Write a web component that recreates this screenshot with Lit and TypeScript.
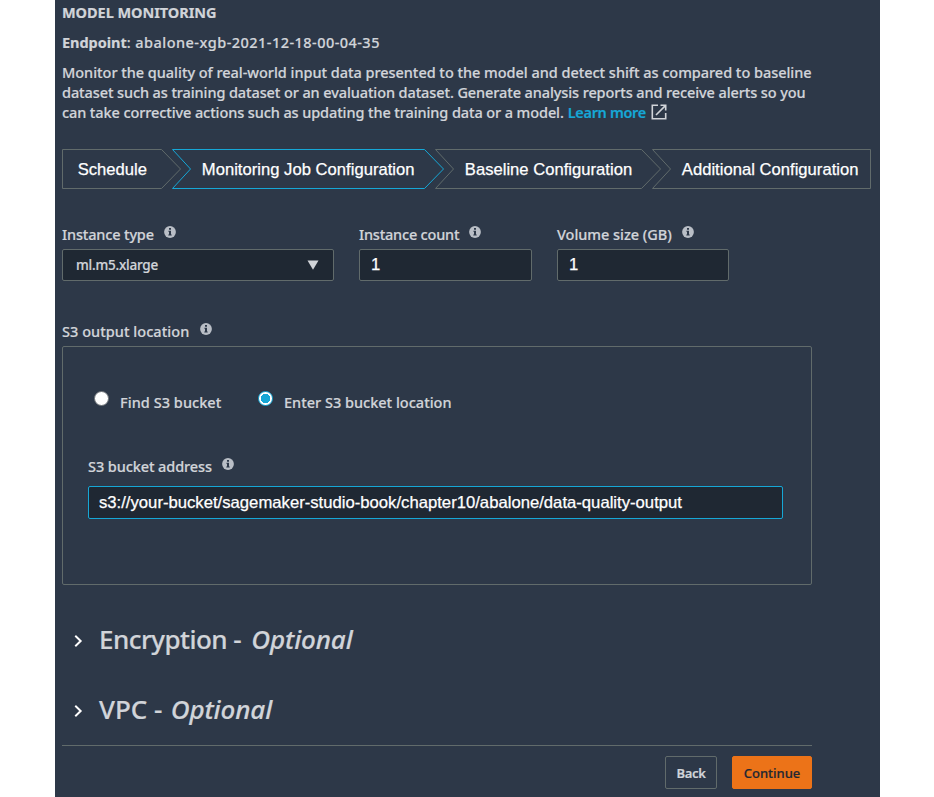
import { LitElement, html, svg, css } from "lit";
import { customElement } from "lit/decorators.js";

interface Step {
  label: string;
  width: number;
  cls: string;
}

const STEPS: Step[] = [
  { label: "Schedule", width: 119, cls: "first" },
  { label: "Monitoring Job Configuration", width: 272, cls: "active" },
  { label: "Baseline Configuration", width: 226, cls: "" },
  { label: "Additional Configuration", width: 219, cls: "last" },
];

const infoIcon = html`<svg class="info" width="12" height="12" viewBox="0 0 12 12">
  <circle cx="6" cy="6" r="5.9" fill="#b9bec6" />
  <path d="M5 2h2v1.7H5zM4.4 4.8H7v3.7h.7v1H4.3v-1H5V5.8h-.6z" fill="#2d3848" />
</svg>`;

const chevron = html`<svg class="chevron" width="10" height="14" viewBox="0 0 10 14">
  <path d="M1.4 1.2 L7.4 7 L1.4 12.8" fill="none" stroke="#fff" stroke-width="2.2" />
</svg>`;

@customElement("app-root")
export class AppRoot extends LitElement {
  static styles = css`
    :host {
      display: block;
      height: 797px;
      overflow: hidden;
      background: #fff;
      font: 500 14.5px/20px "Noto Sans", sans-serif;
      color: #d1d4d9;
      -webkit-text-stroke: 0.2px;
    }
    * { box-sizing: border-box; }
    .panel {
      width: 825px;
      height: 797px;
      margin-left: 55px;
      padding: 2px 9px 0 7px;
      background: #2d3848;
      white-space: nowrap;
    }
    h1 { margin: 0; font-size: 14.5px; line-height: 20px; font-weight: 700; letter-spacing: -0.05px; }
    .endpoint { margin-top: 10px; letter-spacing: 0.46px; }
    .endpoint b { letter-spacing: -0.04px; }
    .intro { margin-top: 10px; }
    .intro div { display: flex; height: 20px; align-items: center; }
    .l1 { letter-spacing: -0.033px; }
    .l2 { letter-spacing: -0.103px; }
    .l3 { letter-spacing: -0.1px; }
    .more { color: #16a7d6; font-weight: 600; margin-left: 4px; letter-spacing: -0.34px; }
    .external { margin-left: 5px; }

    .steps { display: flex; margin-top: 27px; height: 40px; }
    .step {
      display: grid;
      height: 40px;
      margin-left: -9px;
      font: 16.6px/40px "Liberation Sans", Arial, sans-serif;
      color: #fff;
      -webkit-text-stroke: 0.25px #fff;
    }
    .step > * { grid-area: 1 / 1; }
    .step.first { margin-left: 0; }
    .step span { padding: 1px 0 0 29.8px; height: 40px; letter-spacing: 0.02px; }
    .step.first span { padding-left: 15.7px; }
    .step path { fill: none; stroke: #616b6b; }
    .step.active path { stroke: #16a7d6; }

    .fields { display: flex; margin-top: 35px; gap: 25px; }
    .label { display: flex; height: 20px; }
    .info { margin: 2px 0 0 10px; flex: none; }
    .type { width: 272px; }
    .count { width: 173px; }
    .volume { width: 172px; }
    .type .label { letter-spacing: -0.16px; }
    .count .label { letter-spacing: -0.2px; }
    .volume .label { letter-spacing: -0.04px; }
    .box {
      display: flex;
      align-items: center;
      height: 32px;
      margin-top: 5px;
      padding: 0 11px 1px;
      border: 1px solid #616b6b;
      border-radius: 2px;
      background: #1f2833;
      font: 16.68px/30px "Liberation Sans", Arial, sans-serif;
      color: #fff;
      -webkit-text-stroke: 0.25px #fff;
    }
    .select {
      justify-content: space-between;
      padding-right: 14px;
      padding-left: 13px;
      font: 500 13.5px/30px "Noto Sans", sans-serif;
      letter-spacing: -0.22px;
      color: #d1d4d9;
      -webkit-text-stroke: 0.2px #d1d4d9;
    }

    .output { margin-top: 40px; letter-spacing: 0.04px; }
    .output .info { margin-left: 11px; }
    .group {
      width: 750px;
      height: 239px;
      margin-top: 5px;
      padding: 45px 25px 0;
      border: 1px solid #616b6b;
      border-radius: 2px;
    }
    .radios { display: flex; height: 20px; padding-left: 6px; }
    .radio {
      width: 15px;
      height: 15px;
      margin: -1px 11px 0 0;
      border-radius: 50%;
      background: #fff;
      border: 1px solid #6b7075;
    }
    .radio.on { border: 1.5px solid #16a7d6; background: radial-gradient(circle, #16a7d6 4.5px, #fff 5px); }
    .choice { display: flex; }
    .choice.find { width: 164px; letter-spacing: 0.05px; }
    .address { margin-top: 44px; letter-spacing: -0.09px; }
    .group .box { width: 695px; height: 33px; margin-top: 10px; padding: 0 10px; border-color: #16a7d6; }

    .section { display: flex; height: 40px; align-items: center; padding-left: 11px; font-size: 26px; }
    .section.enc { margin-top: 34px; letter-spacing: -0.55px; }
    .section.vpc { margin-top: 30px; letter-spacing: 0; }
    .section em { letter-spacing: -0.12px; margin-left: 1.5px; }
    .section.enc em { margin-left: 4px; }
    .section span { white-space: pre; }
    .chevron { margin: 3px 16px 0 1px; flex: none; width: 9px; }
    .footer {
      display: flex;
      justify-content: flex-end;
      gap: 15px;
      width: 750px;
      margin-top: 16px;
      padding-top: 10px;
      border-top: 1px solid #616b6b;
    }
    .btn {
      height: 33px;
      width: 52px;
      border: 1px solid #616b6b;
      border-radius: 2px;
      text-align: center;
      font-size: 13px;
      line-height: 32px;
      font-weight: 600;
      letter-spacing: -0.3px;
    }
    .btn.primary { width: 80px; background: #ec7318; border-color: #ec7318; color: #1f2833; font-weight: 500; letter-spacing: 0; }
  `;

  private outline(s: Step) {
    const w = s.width;
    const right = s.cls === "last" ? `H${w - 0.5}V39.5` : `H${w - 19.5}L${w - 0.5} 20L${w - 19.5} 39.5`;
    const left = s.cls === "first" ? "H.5Z" : "H.5L18.5 20Z";
    return html`<svg width=${w} height="40">${svg`<path d="M.5 .5${right}${left}" />`}</svg>`;
  }

  render() {
    return html`
      <main class="panel">
        <h1>MODEL MONITORING</h1>
        <div class="endpoint"><b>Endpoint</b>: abalone-xgb-2021-12-18-00-04-35</div>
        <div class="intro">
          <div class="l1">Monitor the quality of real-world input data presented to the model and detect shift as compared to baseline</div>
          <div class="l2">dataset such as training dataset or an evaluation dataset. Generate analysis reports and receive alerts so you</div>
          <div class="l3">
            <span>can take corrective actions such as updating the training data or a model.</span>
            <span class="more">Learn more</span>
            <svg class="external" width="16" height="16" viewBox="0 0 16 16" fill="none" stroke="#d1d4d9" stroke-width="1.6">
              <path d="M7 1.3H1.3V14.7H14.7V9M9.5 1.3H14.7V6.5M14.4 1.6L5 11" />
            </svg>
          </div>
        </div>
        <nav class="steps">
          ${STEPS.map((s) => html`<div class="step ${s.cls}">${this.outline(s)}<span>${s.label}</span></div>`)}
        </nav>
        <section class="fields">
          <div class="type">
            <div class="label">Instance type${infoIcon}</div>
            <div class="box select">
              ml.m5.xlarge
              <svg width="12" height="10" viewBox="0 0 12 10"><path d="M.5 .5H11.5L6 9.7Z" fill="#d1d4d9" /></svg>
            </div>
          </div>
          <div class="count"><div class="label">Instance count${infoIcon}</div><div class="box">1</div></div>
          <div class="volume"><div class="label">Volume size (GB)${infoIcon}</div><div class="box">1</div></div>
        </section>
        <div class="label output">S3 output location${infoIcon}</div>
        <section class="group">
          <div class="radios">
            <div class="choice find"><i class="radio"></i>Find S3 bucket</div>
            <div class="choice"><i class="radio on"></i>Enter S3 bucket location</div>
          </div>
          <div class="label address">S3 bucket address${infoIcon}</div>
          <div class="box">s3://your-bucket/sagemaker-studio-book/chapter10/abalone/data-quality-output</div>
        </section>
        <div class="section enc">${chevron}<span>Encryption - <em>Optional</em></span></div>
        <div class="section vpc">${chevron}<span>VPC - <em>Optional</em></span></div>
        <footer class="footer">
          <div class="btn">Back</div>
          <div class="btn primary">Continue</div>
        </footer>
      </main>
    `;
  }
}
